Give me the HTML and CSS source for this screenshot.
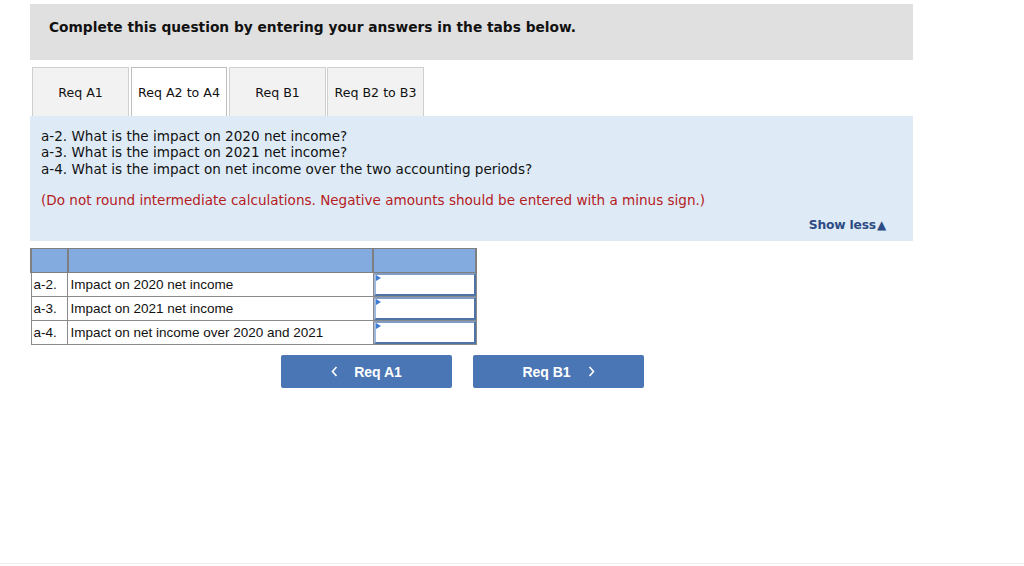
FILE: index.html
```html
<!DOCTYPE html>
<html>
<head>
<meta charset="utf-8">
<link rel="stylesheet" href="styles.css">
</head>
<body>
<div class="page">
  <div class="wrap">
    <div class="head">Complete this question by entering your answers in the tabs below.</div>
    <div class="tabs">
      <div class="tab t1">Req A1</div>
      <div class="tab t2 active">Req A2 to A4</div>
      <div class="tab t3">Req B1</div>
      <div class="tab t4">Req B2 to B3</div>
    </div>
    <div class="panel">
      <div class="q">a-2. What is the impact on 2020 net income?<br>a-3. What is the impact on 2021 net income?<br>a-4. What is the impact on net income over the two accounting periods?</div>
      <div class="note">(Do not round intermediate calculations. Negative amounts should be entered with a minus sign.)</div>
      <div class="showrow"><span class="show">Show less<span class="tri">&#9650;</span></span></div>
    </div>
    <table class="grid">
      <tr class="hdr"><td class="c1"></td><td class="c2"></td><td class="c3"></td></tr>
      <tr><td class="c1">a-2.</td><td class="c2">Impact on 2020 net income</td><td class="c3"><div class="inp"></div></td></tr>
      <tr><td class="c1">a-3.</td><td class="c2">Impact on 2021 net income</td><td class="c3"><div class="inp"></div></td></tr>
      <tr><td class="c1">a-4.</td><td class="c2">Impact on net income over 2020 and 2021</td><td class="c3"><div class="inp"></div></td></tr>
    </table>
    <div class="nav">
      <div class="btn"><svg class="chev l" width="7" height="11" viewBox="0 0 7 11"><polyline points="5.5,1 1.5,5.5 5.5,10" fill="none" stroke="#fff" stroke-width="1.6"/></svg>Req A1</div>
      <div class="btn">Req B1<svg class="chev r" width="7" height="11" viewBox="0 0 7 11"><polyline points="1.5,1 5.5,5.5 1.5,10" fill="none" stroke="#fff" stroke-width="1.6"/></svg></div>
    </div>
  </div>
</div>
</body>
</html>
```
FILE: styles.css
```css
html, body { margin: 0; padding: 0; background: #fff; }
.page {
  height: 564px;
  box-sizing: border-box;
  border-bottom: 1px solid #ededed;
  font-family: "DejaVu Sans", Verdana, sans-serif;
  color: #111;
}
.wrap { padding-left: 30px; padding-top: 4px; width: 883px; }
.head {
  background: #e0e0e0;
  height: 56px;
  box-sizing: border-box;
  padding: 14px 0 0 19px;
  font-weight: bold;
  font-size: 13.75px;
  line-height: 18px;
}
.tabs {
  margin-top: 7px;
  padding-left: 2px;
  display: flex;
  height: 49px;
}
.tab {
  box-sizing: border-box;
  width: 97px;
  height: 49px;
  border: 1px solid #cfcfcf;
  border-bottom: none;
  background: #f2f2f2;
  font-size: 12.6px;
  display: flex;
  align-items: center;
  justify-content: center;
  margin-right: 2px;
  padding-top: 0;
}
.tab.t2 { width: 96px; }
.tab.t3 { margin-right: 1px; }
.tab.active { background: #fff; border-color: #bdbdbd; }
.panel {
  background: #deebf7;
  height: 125px;
  box-sizing: border-box;
  padding: 12px 27px 0 11px;
  font-size: 13.55px;
}
.q { line-height: 16.3px; }
.note { color: #b5201e; margin-top: 15px; line-height: 17px; }
.showrow { display: flex; justify-content: flex-end; margin-top: 9px; }
.show { color: #2d4c83; font-weight: bold; font-size: 12.3px; letter-spacing: -0.2px; }
.tri { font-size: 12px; margin-left: 1px; }
.grid {
  margin-top: 7px;
  border-collapse: collapse;
  font-family: "Liberation Sans", Arial, sans-serif;
  font-size: 13.5px;
  width: 447px;
  border: 1px solid #7f7f7f;
}
.grid td {
  border: 1px solid #8a8a8a;
  height: 23px;
  padding: 0;
  box-sizing: border-box;
}
.grid .c1 { width: 37px; padding-left: 2px; }
.grid .c2 { width: 306px; padding-left: 2px; }
.grid .c3 { width: 103px; position: relative; }
.grid .hdr td { background: #84abdf; border-color: #7f7f7f; border-width: 1px 2px; height: 24px; }
.grid tr:not(.hdr) td { padding-top: 0; }
.grid tr:not(.hdr) td.c3 { padding: 0; }
.inp {
  height: 23px;
  box-sizing: border-box;
  border: 2px solid #5073a5;
  border-left-color: #9fb8dc;
  border-top-color: #7f9cc7;
  background: #fff;
  position: relative;
}
.inp::before {
  content: "";
  position: absolute;
  left: 0;
  top: 0;
  border-left: 5px solid #3f7bd0;
  border-top: 3px solid transparent;
  border-bottom: 3px solid transparent;
}
.nav {
  display: flex;
  margin-top: 10px;
  padding-left: 251px;
  gap: 21px;
}
.btn {
  width: 171px;
  height: 33px;
  background: #4a76b5;
  border-radius: 2px;
  color: #fff;
  font-family: "Liberation Sans", Arial, sans-serif;
  font-weight: bold;
  font-size: 14px;
  display: flex;
  align-items: center;
  justify-content: center;
}
.chev.l { margin-right: 16px; }
.chev.r { margin-left: 17px; }
```
